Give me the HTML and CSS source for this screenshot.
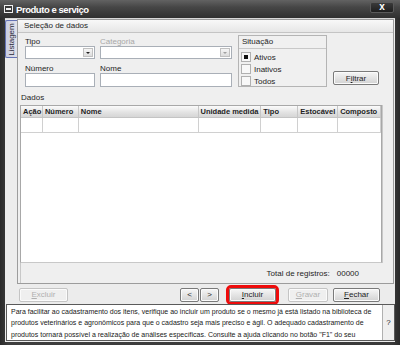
FILE: index.html
```html
<!DOCTYPE html>
<html lang="pt-BR">
<head>
    <meta charset="UTF-8">
    <title>Produto e serviço</title>
    <link rel="stylesheet" href="styles.css">
</head>
<body>
    <div class="window">
        <div class="titlebar">
            <span class="sys-icon"></span>
            <span class="title">Produto e serviço</span>
            <span class="close">x</span>
        </div>

        <div class="client">
            <div class="workspace">
                <div class="tabs">
                    <div class="tab"><span>Listagem</span></div>
                </div>

                <div class="panel">
                    <div class="panel-head">Seleção de dados</div>

                    <div class="filters">
                        <div class="fields">
                            <div class="field tipo">
                                <label>Tipo</label>
                                <div class="combo"><span class="drop"></span></div>
                            </div>
                            <div class="field categoria disabled">
                                <label>Categoria</label>
                                <div class="combo"><span class="drop"></span></div>
                            </div>
                            <div class="field tipo">
                                <label>Número</label>
                                <div class="input"></div>
                            </div>
                            <div class="field categoria">
                                <label>Nome</label>
                                <div class="input"></div>
                            </div>
                        </div>

                        <div class="situacao">
                            <div class="situacao-head">Situação</div>
                            <div class="check"><span class="box checked"></span>Ativos</div>
                            <div class="check"><span class="box"></span>Inativos</div>
                            <div class="check"><span class="box"></span>Todos</div>
                        </div>

                        <button class="btn filtrar">F<u>i</u>ltrar</button>
                    </div>

                    <div class="data-head">Dados</div>

                    <div class="data">
                        <div class="grid">
                            <div class="grid-row grid-header">
                                <div class="col c-acao">Ação</div>
                                <div class="col c-numero">Número</div>
                                <div class="col c-nome">Nome</div>
                                <div class="col c-unidade">Unidade medida</div>
                                <div class="col c-tipo">Tipo</div>
                                <div class="col c-estoc">Estocável</div>
                                <div class="col c-comp">Composto</div>
                            </div>
                            <div class="grid-row grid-line">
                                <div class="col c-acao"></div>
                                <div class="col c-numero"></div>
                                <div class="col c-nome"></div>
                                <div class="col c-unidade"></div>
                                <div class="col c-tipo"></div>
                                <div class="col c-estoc"></div>
                                <div class="col c-comp"></div>
                            </div>
                        </div>
                        <div class="scroll-gap"></div>
                    </div>

                    <div class="totals">
                        <span>Total de registros:</span>
                        <span class="count">00000</span>
                    </div>
                </div>
            </div>

            <div class="actions">
                <button class="btn excluir" disabled><u>E</u>xcluir</button>
                <div class="nav">
                    <button class="btn small">&lt;</button>
                    <button class="btn small">&gt;</button>
                </div>
                <button class="btn incluir highlight"><u>I</u>ncluir</button>
                <button class="btn gravar" disabled><u>G</u>ravar</button>
                <button class="btn fechar"><u>F</u>echar</button>
            </div>

            <div class="help">
                <div class="help-text">Para facilitar ao cadastramento dos itens, verifique ao incluir um produto se o mesmo já está listado na biblioteca de produtos veterinários e agronômicos para que o cadastro seja mais preciso e ágil. O adequado cadastramento de produtos tornará possível a realização de análises específicas. Consulte a ajuda clicando no botão "F1" do seu</div>
                <div class="help-btn">?</div>
            </div>
        </div>
    </div>
</body>
</html>
```

FILE: styles.css
```css
:root {
    --frame: #353535;
    --client: #ececec;
    --border: #9c9c9c;
    --input-border: #a9afb7;
    --text: #1e1e1e;
    --muted: #a8a8a8;
}

* {
    margin: 0;
    padding: 0;
    box-sizing: border-box;
}

body {
    font-family: 'Liberation Sans', Arial, sans-serif;
    font-size: 8px;
    color: var(--text);
    background-color: var(--frame);
}

.window {
    width: 400px;
    height: 345px;
    display: flex;
    flex-direction: column;
    background: linear-gradient(to right, #2a2a2a, #3e3e3e 2%, #3a3a3a 98%, #2a2a2a);
    padding: 0 5px 5px 5px;
}

/* title bar */

.titlebar {
    height: 18px;
    flex-shrink: 0;
    display: flex;
    align-items: center;
    margin: 0 -5px;
    padding: 0 6px 0 4px;
    background: linear-gradient(to bottom, #626262, #464646 40%, #303030);
}

.sys-icon {
    width: 9px;
    height: 8px;
    border: 1px solid #f0f0f0;
    position: relative;
    margin-right: 3px;
    background: #3a3a3a;
}

.sys-icon::after {
    content: '';
    position: absolute;
    left: 1px;
    right: 1px;
    top: 2px;
    height: 2px;
    background: #f0f0f0;
}

.title {
    color: #ffffff;
    font-size: 9.5px;
    font-weight: bold;
    letter-spacing: -0.45px;
    flex: 1;
}

.close {
    width: 24px;
    height: 11px;
    margin-top: -4px;
    border: 1px solid #5a5a5a;
    border-radius: 2px;
    background: linear-gradient(to bottom, #3a3a3a, #1e1e1e);
    color: #ffffff;
    font-weight: bold;
    font-size: 10px;
    line-height: 8px;
    text-align: center;
}

/* client area */

.client {
    flex: 1;
    display: flex;
    flex-direction: column;
    background-color: var(--client);
    border-top: 1px solid #d8d8d8;
}

.workspace {
    display: flex;
    height: 265px;
}

.tabs {
    width: 12px;
    padding-top: 1px;
}

.tab {
    width: 12px;
    height: 38px;
    border: 1px solid #6472b4;
    border-right: none;
    border-radius: 2px 0 0 2px;
    background: linear-gradient(to right, #c9cde0, #e2e2ea);
    display: flex;
    align-items: center;
    justify-content: center;
}

.tab span {
    transform: rotate(-90deg);
    white-space: nowrap;
    font-size: 8px;
    color: #2a2a3a;
}

.panel {
    flex: 1;
    margin-right: 1px;
    border: 1px solid var(--border);
    background-color: #efefef;
    display: flex;
    flex-direction: column;
}

.panel-head {
    height: 13px;
    line-height: 12px;
    padding-left: 6px;
    background: linear-gradient(to bottom, #f8f8f8, #e6e6e6);
    border-bottom: 1px solid #c4c4c4;
}

/* filters */

.filters {
    display: flex;
    align-items: flex-start;
    padding: 2px 0 0 7px;
    height: 56px;
}

.fields {
    display: grid;
    grid-template-columns: 70px 132px;
    column-gap: 5px;
    row-gap: 3px;
}

.field label {
    display: block;
    height: 11px;
    line-height: 11px;
    padding-top: 1px;
}

.field.disabled label {
    color: var(--muted);
}

.combo,
.input {
    height: 13px;
    background: #ffffff;
    border: 1px solid var(--input-border);
    display: flex;
    justify-content: flex-end;
    padding: 1px;
}

.input {
    height: 14px;
}

.drop {
    width: 10px;
    height: 9px;
    background: linear-gradient(to bottom, #f6f6f6, #dcdcdc);
    border: 1px solid #c0c0c0;
    position: relative;
}

.drop::after {
    content: '';
    position: absolute;
    left: 2px;
    top: 3px;
    border-left: 2px solid transparent;
    border-right: 2px solid transparent;
    border-top: 2px solid #202020;
}

.disabled .drop::after {
    border-top-color: #a0a0a0;
}

.situacao {
    width: 89px;
    height: 52px;
    margin-left: 6px;
    border: 1px solid #b4b4b4;
    background-color: #f0f0f0;
}

.situacao-head {
    height: 13px;
    line-height: 12px;
    padding-left: 3px;
    border-bottom: 1px solid #c8c8c8;
    margin-bottom: 2px;
}

.check {
    display: flex;
    align-items: center;
    height: 12px;
    padding-left: 2px;
}

.box {
    width: 10px;
    height: 10px;
    border: 1px solid #b0b0b0;
    background: #f8f8f8;
    margin-right: 3px;
    display: flex;
    align-items: center;
    justify-content: center;
}

.box.checked::after {
    content: '';
    width: 4px;
    height: 4px;
    background: #101010;
}

/* buttons */

.btn {
    font-family: inherit;
    font-size: 8px;
    color: var(--text);
    height: 14px;
    border: 1px solid #7a7a7a;
    border-radius: 2px;
    background: linear-gradient(to bottom, #f6f6f6, #e4e4e4 50%, #d2d2d2);
    box-shadow: inset 0 0 0 1px #fbfbfb;
}

.btn:disabled {
    color: #b0b0b0;
    border-color: #c4c4c4;
    background: #efefef;
}

.filtrar {
    width: 46px;
    margin: 36px 0 0 6px;
}

/* data */

.data-head {
    height: 16px;
    line-height: 18px;
    padding-left: 3px;
}

.data {
    flex: 1;
    display: flex;
    padding-left: 2px;
}

.grid {
    width: 362px;
    border: 1px solid #a8a8a8;
    border-bottom-color: #c8c8c8;
    background: #ffffff;
}

.scroll-gap {
    flex: 1;
    border-left: 1px solid #c8c8c8;
}

.grid-row {
    display: flex;
}

.grid-header {
    height: 12px;
    background: linear-gradient(to bottom, #fbfbfb, #e2e2e2 60%, #d6d6d6);
    border-bottom: 1px solid #c4c4c4;
    font-weight: bold;
    font-size: 7.5px;
}

.grid-header .col {
    line-height: 11px;
    padding-left: 2px;
    border-right: 1px solid #c6c6c6;
}

.grid-line {
    height: 15px;
    border-bottom: 1px solid #d0d0d0;
}

.grid-line .col {
    border-right: 1px solid #d0d0d0;
}

.col {
    overflow: hidden;
    white-space: nowrap;
}

.c-acao { width: 22px; }
.c-numero { width: 36px; }
.c-nome { width: 120px; }
.c-unidade { width: 63px; }
.c-tipo { width: 37px; }
.c-estoc { width: 40px; }
.c-comp { width: 43px; }

.totals {
    height: 20px;
    margin-left: 2px;
    margin-right: 9px;
    display: flex;
    align-items: center;
    justify-content: flex-end;
    gap: 7px;
    padding-right: 25px;
    border-left: 1px solid #c8c8c8;
}

/* actions */

.actions {
    height: 20px;
    display: flex;
    align-items: center;
    padding: 1px 0 0 14px;
}

.excluir {
    width: 49px;
}

.nav {
    display: flex;
    gap: 1px;
    margin-left: 112px;
}

.btn.small {
    width: 19px;
}

.incluir {
    width: 47px;
    margin-left: 10px;
}

.highlight {
    outline: 3px solid #ee0c0c;
}

.gravar {
    width: 40px;
    margin-left: 12px;
}

.fechar {
    width: 47px;
    margin-left: 5px;
}

/* help */

.help {
    flex: 1;
    display: flex;
    margin: 0 0 1px 1px;
    border: 1px solid #5a5a5a;
    overflow: hidden;
}

.help-text {
    flex: 1;
    background: #ffffff;
    padding: 1px 3px 0 4px;
    line-height: 11.3px;
    font-size: 7px;
    color: #202020;
    overflow: hidden;
}

.help-btn {
    width: 12px;
    border-left: 1px solid #b0b0b0;
    display: flex;
    align-items: center;
    justify-content: center;
    background: #efefef;
}
```
